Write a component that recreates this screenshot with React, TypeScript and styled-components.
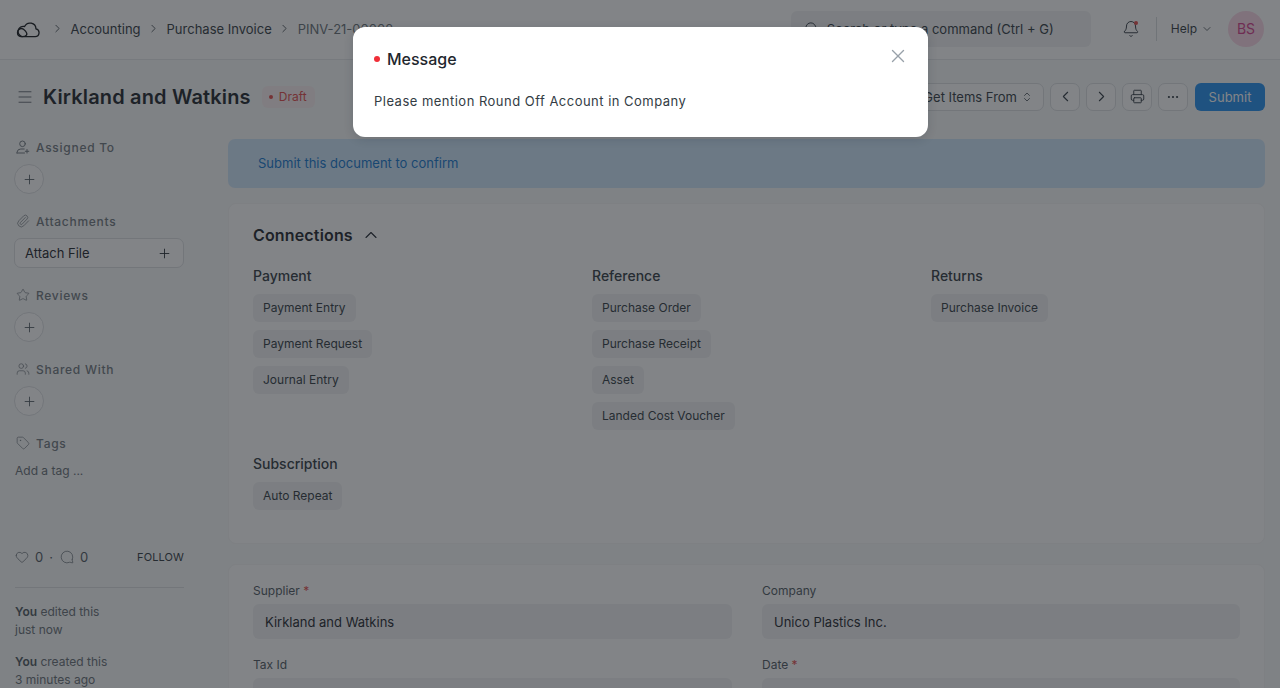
import React from 'react';
import styled, { createGlobalStyle } from 'styled-components';
import { ChevronRight, ChevronLeft, ChevronUp, ChevronDown, ChevronsUpDown, Plus, X, Search, Menu, Printer, Ellipsis, Paperclip, Star, Tag, Heart, MessageCircle, Users, Bell } from 'lucide-react';

const GlobalStyle = createGlobalStyle`
  html, body {
    margin: 0;
    height: 688px;
    overflow: hidden;
    background: #f9fafa;
    font-family: Inter, "Liberation Sans", sans-serif;
    color: #1f272e;
    font-size: 13px;
  }
  * { box-sizing: border-box; }
`;

const Shell = styled.div`
  position: relative;
  height: 688px;
  overflow: hidden;
`;

const Backdrop = styled.div`
  position: absolute;
  inset: 0;
  background: rgba(27, 31, 36, 0.55);
`;

const Navbar = styled.header`
  height: 60px;
  background: #fff;
  border-bottom: 1px solid #e6e8ea;
  display: flex;
  align-items: center;
  padding: 0 16px 2px;
`;

const Logo = styled.svg`
  width: 24px;
  height: 18px;
  flex: none;
`;

const Crumbs = styled.nav`
  display: flex;
  align-items: center;
  margin-left: 11px;
  flex: 1;
  color: #333c44;
`;

const Crumb = styled.span<{ $muted?: boolean }>`
  font-size: 13px;
  color: ${p => (p.$muted ? '#687178' : '#333c44')};
  margin: 0 6.5px;
  white-space: nowrap;
`;

const SearchBox = styled.div`
  width: 300px;
  height: 36px;
  background: #f1f2f4;
  border-radius: 6px;
  display: flex;
  align-items: center;
  gap: 8px;
  padding: 0 13px;
  color: #333c44;
  font-size: 13px;
  margin-right: 31px;
`;

const BellWrap = styled.span`
  position: relative;
  display: inline-flex;
  color: #333c44;
  &::after {
    content: '';
    position: absolute;
    top: 1px;
    right: 2px;
    width: 4px;
    height: 4px;
    border-radius: 50%;
    background: #e24c4c;
  }
`;

const VRule = styled.span`
  width: 1px;
  height: 24px;
  background: #d8dbde;
  margin: 0 14px 0 16px;
`;

const HelpMenu = styled.span`
  display: inline-flex;
  align-items: center;
  gap: 4px;
  font-size: 12px;
  color: #333c44;
  margin-right: 15px;
`;

const Avatar = styled.span`
  width: 36px;
  height: 36px;
  border-radius: 50%;
  background: #fad7e6;
  color: #d53f8c;
  display: flex;
  align-items: center;
  justify-content: center;
  font-size: 14px;
`;

const PageHead = styled.div`
  height: 79px;
  display: flex;
  align-items: center;
  padding: 0 15px 6px 16px;
`;

const Title = styled.h1`
  font-size: 20px;
  line-height: 28px;
  font-weight: 600;
  margin: 0 0 0 9px;
  letter-spacing: 0.008em;
  white-space: nowrap;
`;

const DraftPill = styled.span`
  margin-left: 11px;
  height: 22px;
  padding: 0 8px 0 7px;
  border-radius: 6px;
  background: #faf0f1;
  color: #e24c4c;
  font-size: 12px;
  display: inline-flex;
  align-items: center;
  gap: 6px;
  &::before {
    content: '';
    width: 4px;
    height: 4px;
    border-radius: 50%;
    background: #e24c4c;
  }
`;

const Actions = styled.div`
  margin-left: auto;
  display: flex;
  align-items: center;
  gap: 6px;
`;

const ActionButton = styled.button<{ $wide?: boolean }>`
  height: 28px;
  width: ${p => (p.$wide ? '140px' : '30px')};
  border: 1px solid #dde0e3;
  border-radius: 7px;
  background: #fff;
  color: #333c44;
  font: inherit;
  font-size: 13px;
  display: inline-flex;
  align-items: center;
  justify-content: ${p => (p.$wide ? 'flex-end' : 'center')};
  gap: 4px;
  padding: ${p => (p.$wide ? '0 10px 0 0' : '0')};
`;

const SubmitButton = styled.button`
  height: 28px;
  width: 70px;
  margin-left: 1px;
  border: 0;
  border-radius: 6px;
  background: #2490ef;
  color: #fff;
  font: inherit;
  font-size: 13px;
`;

const Body = styled.div`
  display: grid;
  grid-template-columns: 169px minmax(0, 1fr);
  column-gap: 44px;
  padding: 0 15px;
`;

const Sidebar = styled.aside`
  display: flex;
  flex-direction: column;
  margin-left: -1px;
  width: 170px;
`;

const SideSection = styled.section`
  height: 74px;
`;

const SideLabel = styled.div`
  display: flex;
  align-items: center;
  gap: 6px;
  height: 16px;
  padding-left: 2px;
  margin-bottom: 9px;
  font-size: 12px;
  font-weight: 500;
  letter-spacing: 0.06em;
  color: #727b82;
`;

const RoundAdd = styled.button`
  width: 30px;
  height: 30px;
  border-radius: 50%;
  border: 1px solid #dde0e3;
  background: #fff;
  color: #505a62;
  display: flex;
  align-items: center;
  justify-content: center;
  padding: 0;
`;

const AttachButton = styled.button`
  width: 170px;
  height: 30px;
  border: 1px solid #dde0e3;
  border-radius: 7px;
  background: #fff;
  color: #1f272e;
  font: inherit;
  font-size: 13px;
  display: flex;
  align-items: center;
  justify-content: space-between;
  padding: 0 11px 0 10px;
`;

const TagHint = styled.div`
  font-size: 12px;
  color: #687178;
  padding-left: 1px;
  margin-top: 12px;
`;

const Stats = styled.div`
  display: flex;
  align-items: center;
  height: 18px;
  margin-top: 39px;
  padding-left: 1px;
  color: #505a62;
  font-size: 13px;
  gap: 6px;
`;

const FlippedIcon = styled.span`
  display: inline-flex;
  margin-left: 1px;
  transform: scaleX(-1);
`;

const FollowLink = styled.span`
  margin-left: auto;
  font-size: 11px;
  color: #333c44;
  letter-spacing: 0.01em;
`;

const SideRule = styled.hr`
  border: 0;
  border-top: 1px solid #dde0e3;
  margin: 21px 0 15px 1px;
  width: 169px;
`;

const Activity = styled.p`
  margin: 0 0 14px 1px;
  font-size: 12px;
  line-height: 18px;
  color: #687178;
  b { font-weight: 600; color: #505a62; }
`;

const Main = styled.main`
  display: flex;
  flex-direction: column;
  gap: 15px;
`;

const Alert = styled.div`
  height: 49px;
  border-radius: 7px;
  background: #cfe6fa;
  color: #1579d0;
  font-size: 13px;
  display: flex;
  align-items: center;
  padding: 0 0 2px 30px;
`;

const Card = styled.section`
  background: #fff;
  border: 1px solid #f5f6f6;
  border-radius: 8px;
  padding: 24px 24px 25px;
`;

const ConnectionsCard = styled(Card)`
  padding: 22px 24px 33px;
  margin-bottom: 5px;
`;

const FormCard = styled(Card)`
  padding-top: 18px;
`;

const CardTitle = styled.h2`
  display: flex;
  align-items: center;
  gap: 8px;
  margin: 0 0 23px;
  height: 18px;
  font-size: 16px;
  font-weight: 600;
  letter-spacing: 0.01em;
  color: #1f272e;
`;

const ConnectionGrid = styled.div`
  display: grid;
  grid-template-columns: repeat(3, 339px);
  row-gap: 25px;
`;

const Group = styled.div`
  display: flex;
  flex-direction: column;
  align-items: flex-start;
  gap: 8px;
`;

const GroupName = styled.div`
  font-size: 14px;
  font-weight: 500;
  line-height: 18px;
  color: #333c44;
  margin-bottom: 1px;
`;

const Chip = styled.span`
  height: 28px;
  padding: 0 10px 1px;
  border-radius: 6px;
  background: #f1f2f4;
  color: #333c44;
  font-size: 12px;
  display: inline-flex;
  align-items: center;
  white-space: nowrap;
`;

const FormGrid = styled.div`
  display: grid;
  grid-template-columns: 479px 478px;
  column-gap: 30px;
  row-gap: 18px;
`;

const FieldLabel = styled.label`
  display: block;
  font-size: 12px;
  line-height: 16px;
  color: #505a62;
  margin-bottom: 5px;
  i { font-style: normal; color: #e24c4c; }
`;

const FieldValue = styled.div`
  height: 35px;
  border-radius: 6px;
  background: #f1f2f4;
  padding: 0 12px;
  display: flex;
  align-items: center;
  font-size: 13px;
  color: #1f272e;
`;

const Dialog = styled.div`
  position: absolute;
  left: 353px;
  top: 27px;
  width: 575px;
  height: 110px;
  background: #fff;
  border-radius: 12px;
  box-shadow: 0 2px 10px rgba(25, 39, 52, 0.18);
  padding: 0 20px;
`;

const DialogHead = styled.div`
  display: flex;
  align-items: center;
  height: 64px;
  padding-left: 1px;
`;

const Dot = styled.span`
  width: 6px;
  height: 6px;
  border-radius: 50%;
  background: #f02e38;
  margin-right: 7px;
  flex: none;
`;

const DialogTitle = styled.h4`
  margin: 0;
  font-size: 16px;
  font-weight: 500;
  color: #1f272e;
`;

const CloseButton = styled.span`
  margin-left: auto;
  margin-right: -1px;
  margin-top: -6px;
  display: flex;
  color: #98a1a9;
`;

const DialogText = styled.p`
  margin: 1px 0 0 1px;
  font-size: 13px;
  line-height: 18px;
  letter-spacing: 0.48px;
  color: #333c44;
`;

const connections = [
  { name: 'Payment', items: ['Payment Entry', 'Payment Request', 'Journal Entry'] },
  { name: 'Reference', items: ['Purchase Order', 'Purchase Receipt', 'Asset', 'Landed Cost Voucher'] },
  { name: 'Returns', items: ['Purchase Invoice'] },
  { name: 'Subscription', items: ['Auto Repeat'] },
];

const CloudLogo = () => (
  <Logo viewBox="0 0 24 18" fill="none" stroke="#14181c" strokeWidth="1.3" strokeLinejoin="round">
    <path d="M6 16.6h13.2a3.9 3.9 0 0 0 .8-7.7 6 6 0 0 0-11.4-2.4 5 5 0 0 0-2.6 10.1z" />
    <path d="M1.5 12.500a4 4 0 0 1 4-4c2 0 3 1.400 4 2.600s2 2.600 1 4-3 1.500-4.500 1.500h-1a4 4 0 0 1-3.500-4.100z" />
  </Logo>
);

const AssignIcon = () => (
  <svg width="14" height="14" viewBox="0 0 14 14" fill="none" stroke="currentColor" strokeWidth="1" strokeLinecap="round">
    <circle cx="6.500" cy="3.800" r="2.800" />
    <path d="M1 13v-.800a3.800 3.800 0 0 1 3.800-3.200h3.400" />
    <path d="M1 13h7.500M11 9.500v3.500M9.300 11.300h3.500" />
  </svg>
);

const SideBlock: React.FC<{ icon: React.ReactNode; label: string; children?: React.ReactNode }> = ({ icon, label, children }) => (
  <SideSection>
    <SideLabel>{icon}{label}</SideLabel>
    {children}
  </SideSection>
);

const AddButton = () => (
  <RoundAdd><Plus size={15} strokeWidth={1.4} /></RoundAdd>
);

export default function App() {
  return (
    <>
      <GlobalStyle />
      <Shell>
        <Navbar>
          <CloudLogo />
          <Crumbs>
            <ChevronRight size={13} strokeWidth={1.5} />
            <Crumb>Accounting</Crumb>
            <ChevronRight size={13} strokeWidth={1.5} />
            <Crumb>Purchase Invoice</Crumb>
            <ChevronRight size={13} strokeWidth={1.5} />
            <Crumb $muted>PINV-21-00002</Crumb>
          </Crumbs>
          <SearchBox>
            <Search size={15} strokeWidth={1.5} />
            Search or type a command (Ctrl + G)
          </SearchBox>
          <BellWrap><Bell size={18} strokeWidth={1.3} /></BellWrap>
          <VRule />
          <HelpMenu>Help <ChevronDown size={12} strokeWidth={1.5} /></HelpMenu>
          <Avatar>BS</Avatar>
        </Navbar>

        <PageHead>
          <Menu size={18} strokeWidth={1.3} color="#687178" />
          <Title>Kirkland and Watkins</Title>
          <DraftPill>Draft</DraftPill>
          <Actions>
            <ActionButton $wide>Get Items From <ChevronsUpDown size={12} strokeWidth={1.5} /></ActionButton>
            <ActionButton><ChevronLeft size={17} strokeWidth={1.5} /></ActionButton>
            <ActionButton><ChevronRight size={17} strokeWidth={1.5} /></ActionButton>
            <ActionButton><Printer size={15} strokeWidth={1.5} /></ActionButton>
            <ActionButton><Ellipsis size={14} strokeWidth={1.8} /></ActionButton>
            <SubmitButton>Submit</SubmitButton>
          </Actions>
        </PageHead>

        <Body>
          <Sidebar>
            <SideBlock icon={<AssignIcon />} label="Assigned To"><AddButton /></SideBlock>
            <SideBlock icon={<Paperclip size={14} strokeWidth={1.2} />} label="Attachments">
              <AttachButton>Attach File <Plus size={15} strokeWidth={1.4} /></AttachButton>
            </SideBlock>
            <SideBlock icon={<Star size={14} strokeWidth={1.2} />} label="Reviews"><AddButton /></SideBlock>
            <SideBlock icon={<Users size={14} strokeWidth={1.2} />} label="Shared With"><AddButton /></SideBlock>
            <SideBlock icon={<Tag size={14} strokeWidth={1.2} />} label="Tags">
              <TagHint>Add a tag ...</TagHint>
            </SideBlock>
            <Stats>
              <Heart size={14} strokeWidth={1.1} /> 0 <span>·</span>
              <FlippedIcon><MessageCircle size={14} strokeWidth={1.1} /></FlippedIcon> 0
              <FollowLink>FOLLOW</FollowLink>
            </Stats>
            <SideRule />
            <Activity><b>You</b> edited this<br />just now</Activity>
            <Activity><b>You</b> created this<br />3 minutes ago</Activity>
          </Sidebar>

          <Main>
            <Alert>Submit this document to confirm</Alert>
            <ConnectionsCard>
              <CardTitle>Connections <ChevronUp size={20} strokeWidth={1.3} /></CardTitle>
              <ConnectionGrid>
                {connections.map(group => (
                  <Group key={group.name}>
                    <GroupName>{group.name}</GroupName>
                    {group.items.map(item => <Chip key={item}>{item}</Chip>)}
                  </Group>
                ))}
              </ConnectionGrid>
            </ConnectionsCard>
            <FormCard>
              <FormGrid>
                <div>
                  <FieldLabel>Supplier <i>*</i></FieldLabel>
                  <FieldValue>Kirkland and Watkins</FieldValue>
                </div>
                <div>
                  <FieldLabel>Company</FieldLabel>
                  <FieldValue>Unico Plastics Inc.</FieldValue>
                </div>
                <div>
                  <FieldLabel>Tax Id</FieldLabel>
                  <FieldValue />
                </div>
                <div>
                  <FieldLabel>Date <i>*</i></FieldLabel>
                  <FieldValue />
                </div>
              </FormGrid>
            </FormCard>
          </Main>
        </Body>

        <Backdrop />
        <Dialog role="dialog">
          <DialogHead>
            <Dot />
            <DialogTitle>Message</DialogTitle>
            <CloseButton><X size={22} strokeWidth={1.5} /></CloseButton>
          </DialogHead>
          <DialogText>Please mention Round Off Account in Company</DialogText>
        </Dialog>
      </Shell>
    </>
  );
}
